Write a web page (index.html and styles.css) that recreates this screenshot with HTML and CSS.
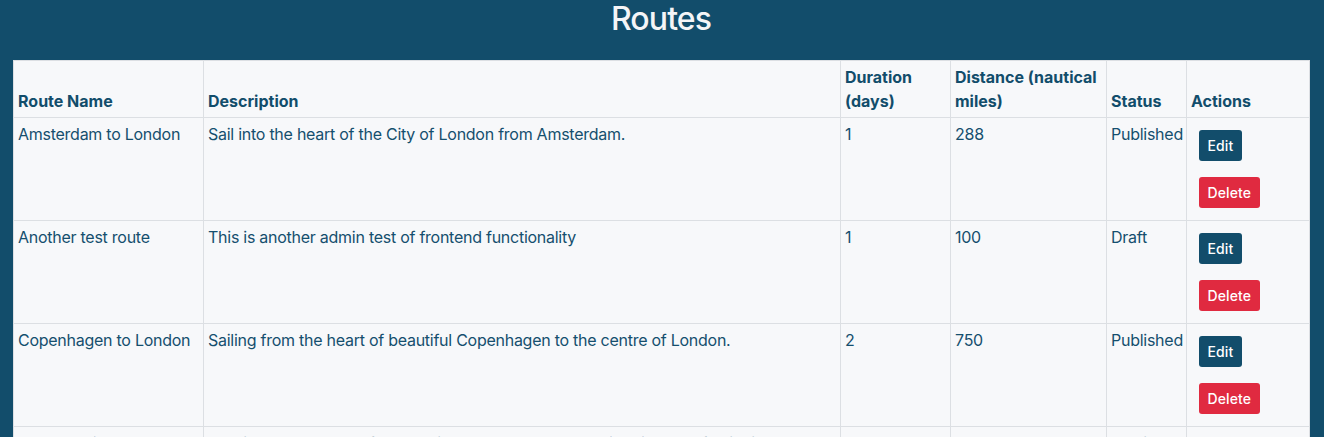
FILE: index.html
```html
<!DOCTYPE html>
<html lang="en">
<head>
<meta charset="utf-8">
<title>Routes</title>
<link rel="stylesheet" href="styles.css">
</head>
<body>
<main class="page">
  <h1 class="title">Routes</h1>
  <table class="routes">
    <colgroup>
      <col class="c-name"><col class="c-desc"><col class="c-dur"><col class="c-dist"><col class="c-status"><col class="c-actions">
    </colgroup>
    <thead>
      <tr>
        <th>Route Name</th>
        <th>Description</th>
        <th>Duration (days)</th>
        <th>Distance (nautical miles)</th>
        <th>Status</th>
        <th>Actions</th>
      </tr>
    </thead>
    <tbody>
      <tr>
        <td>Amsterdam to London</td>
        <td>Sail into the heart of the City of London from Amsterdam.</td>
        <td>1</td>
        <td>288</td>
        <td>Published</td>
        <td><div class="actions"><button class="btn btn-edit">Edit</button><button class="btn btn-delete">Delete</button></div></td>
      </tr>
      <tr>
        <td>Another test route</td>
        <td>This is another admin test of frontend functionality</td>
        <td>1</td>
        <td>100</td>
        <td>Draft</td>
        <td><div class="actions"><button class="btn btn-edit">Edit</button><button class="btn btn-delete">Delete</button></div></td>
      </tr>
      <tr>
        <td>Copenhagen to London</td>
        <td>Sailing from the heart of beautiful Copenhagen to the centre of London.</td>
        <td>2</td>
        <td>750</td>
        <td>Published</td>
        <td><div class="actions"><button class="btn btn-edit">Edit</button><button class="btn btn-delete">Delete</button></div></td>
      </tr>
      <tr>
        <td>Oslo to Edinburgh</td>
        <td>Leaving the harbour of Oslo, sail the North Sea to the historic Port of Leith in Edinburgh.</td>
        <td>3</td>
        <td>480</td>
        <td>Published</td>
        <td><div class="actions"><button class="btn btn-edit">Edit</button><button class="btn btn-delete">Delete</button></div></td>
      </tr>
    </tbody>
  </table>
</main>
</body>
</html>
```

FILE: styles.css
```css
html, body {
  margin: 0;
  padding: 0;
  background: #124d6b;
}

body {
  font-family: Inter, "Liberation Sans", Arial, sans-serif;
  color: #154f6e;
}

.page {
  padding: 0 15px 0 13px;
}

.title {
  margin: 0 0 22px 0;
  font-size: 32px;
  line-height: 38px;
  font-weight: 500;
  letter-spacing: -0.9px;
  color: #f4f5f7;
  text-align: center;
}

.routes {
  width: 1296px;
  border-collapse: collapse;
  background: #f7f8fa;
  table-layout: fixed;
  font-size: 16px;
  line-height: 24px;
}

.c-name { width: 190px; }
.c-desc { width: 637px; }
.c-dur { width: 110px; }
.c-dist { width: 156px; }
.c-status { width: 80px; }
.c-actions { width: 123px; }

.routes th,
.routes td {
  border: 1px solid #dcdfe3;
  padding: 4px;
  text-align: left;
}

.routes th {
  vertical-align: bottom;
  font-weight: 700;
  color: #124d6b;
}

.routes td {
  vertical-align: top;
  font-weight: 400;
  letter-spacing: -0.26px;
}

.actions {
  display: flex;
  flex-direction: column;
  align-items: flex-start;
}

.btn {
  margin: 8px;
  border: 0;
  border-radius: 3px;
  padding: 5px 8.5px;
  font-family: inherit;
  font-size: 14px;
  line-height: 21px;
  font-weight: 500;
  letter-spacing: 0.1px;
  color: #ffffff;
  cursor: pointer;
}

.btn-edit {
  background: #124d6b;
}

.btn-delete {
  background: #e02a40;
}
```
